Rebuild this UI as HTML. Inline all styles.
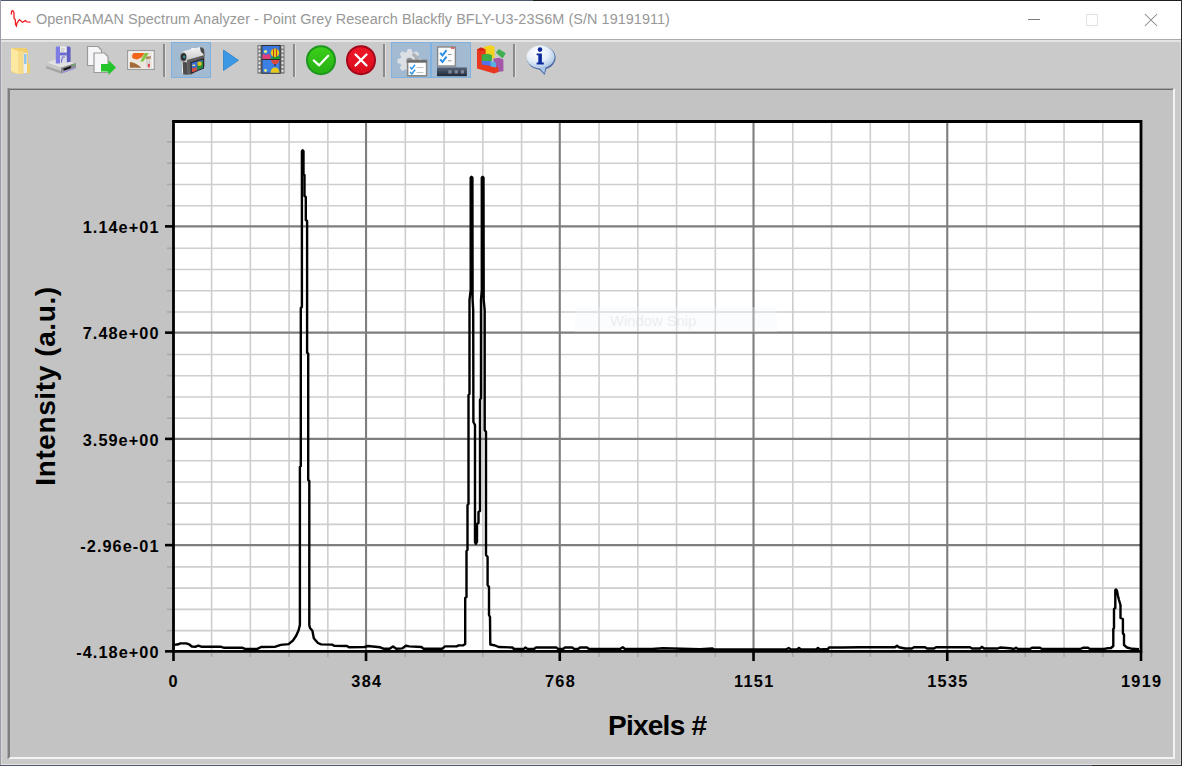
<!DOCTYPE html>
<html><head><meta charset="utf-8">
<style>
*{margin:0;padding:0;box-sizing:border-box}
html,body{width:1182px;height:766px;overflow:hidden;background:#cacaca;font-family:"Liberation Sans",sans-serif;position:relative}
.abs{position:absolute}
#title{left:1px;top:1px;width:1180px;height:38px;background:#fff}
#ttext{left:36px;top:10.5px;font-size:14.45px;color:#989898;white-space:nowrap;letter-spacing:0.05px}
#panel{left:8px;top:88px;width:1167px;height:671px;background:#c3c3c3;border-top:1px solid #a4a4a4;border-left:2px solid #7e7e7e;border-right:2px solid #f2f2f2;border-bottom:2px solid #f2f2f2;box-shadow:inset 0 1px 0 #6c6c6c,-1px 0 0 #a8a8a8}
.chart{position:absolute;left:0;top:0}
.mn{stroke:#cecece;stroke-width:1.6}
.mj{stroke:#7e7e7e;stroke-width:2.1}
.tn{stroke:#a8a8a8;stroke-width:1.6}
.tj{stroke:#000;stroke-width:2.6}
.xl{position:absolute;top:672px;width:80px;text-align:center;font-weight:bold;font-size:16.3px;letter-spacing:1.3px;text-indent:1.3px;color:#000}
.yl{position:absolute;left:0;width:159.5px;text-align:right;font-weight:bold;font-size:16.3px;letter-spacing:1.05px;color:#000}
#ylab{left:46px;top:386px;transform:translate(-50%,-50%) rotate(-90deg);font-weight:bold;font-size:28px;white-space:nowrap;letter-spacing:0.6px}
#xlab{left:608px;top:709.6px;font-weight:bold;font-size:28px;white-space:nowrap;letter-spacing:-0.75px}
.sep{position:absolute;top:44px;width:3px;height:33px;background:#8a8a8a;border-right:1px solid #e0e0e0}
.chk{position:absolute;top:42px;height:36px;background:#a2bbd3;border:1px solid #7eb2e0}
</style></head><body>
<div class="abs" style="left:0;top:0;width:533px;height:1px;background:#4c5b70"></div>
<div class="abs" style="left:533px;top:0;width:649px;height:1px;background:#1e1e1e"></div>
<div class="abs" style="left:0;top:0;width:1px;height:766px;background:#9a9ea6"></div>
<div class="abs" style="left:1181px;top:0;width:1px;height:766px;background:#2c2a28"></div>
<div class="abs" style="left:0;top:765px;width:1092px;height:1px;background:#4e5a6a"></div><div class="abs" style="left:1092px;top:765px;width:90px;height:1px;background:#2e2e2e"></div>
<div class="abs" style="left:1px;top:1px;width:1px;height:764px;background:#d6d6d6"></div>
<div class="abs" style="left:1180px;top:1px;width:1px;height:764px;background:#d8d8d8"></div>
<div class="abs" style="left:1px;top:764px;width:1180px;height:1px;background:#e4e4e4"></div>
<div id="title" class="abs"></div>
<div class="abs" style="left:1px;top:39px;width:1180px;height:1px;background:#ababab"></div>
<div class="abs" style="left:1px;top:40px;width:1180px;height:2px;background:#e4e4e4"></div>
<div id="ttext" class="abs">OpenRAMAN Spectrum Analyzer - Point Grey Research Blackfly BFLY-U3-23S6M (S/N 19191911)</div>
<div class="chk" style="left:171px;width:40px"></div>
<div class="chk" style="left:391px;width:40px"></div>
<div class="chk" style="left:431px;width:40px"></div>
<div class="sep" style="left:163px"></div>
<div class="sep" style="left:293px"></div>
<div class="sep" style="left:383px"></div>
<div class="sep" style="left:513px"></div>
<div id="panel" class="abs"></div>
<svg class="chart" width="1182" height="766" viewBox="0 0 1182 766">
<rect x="173" y="121" width="968" height="530" fill="#fff"/>
<g><line x1="211.6" y1="120.16" x2="211.6" y2="651.36" class="mn"/><line x1="250.35" y1="120.16" x2="250.35" y2="651.36" class="mn"/><line x1="289.09" y1="120.16" x2="289.09" y2="651.36" class="mn"/><line x1="327.84" y1="120.16" x2="327.84" y2="651.36" class="mn"/><line x1="405.34" y1="120.16" x2="405.34" y2="651.36" class="mn"/><line x1="444.09" y1="120.16" x2="444.09" y2="651.36" class="mn"/><line x1="482.83" y1="120.16" x2="482.83" y2="651.36" class="mn"/><line x1="521.58" y1="120.16" x2="521.58" y2="651.36" class="mn"/><line x1="599.08" y1="120.16" x2="599.08" y2="651.36" class="mn"/><line x1="637.83" y1="120.16" x2="637.83" y2="651.36" class="mn"/><line x1="676.57" y1="120.16" x2="676.57" y2="651.36" class="mn"/><line x1="715.32" y1="120.16" x2="715.32" y2="651.36" class="mn"/><line x1="792.82" y1="120.16" x2="792.82" y2="651.36" class="mn"/><line x1="831.57" y1="120.16" x2="831.57" y2="651.36" class="mn"/><line x1="870.31" y1="120.16" x2="870.31" y2="651.36" class="mn"/><line x1="909.06" y1="120.16" x2="909.06" y2="651.36" class="mn"/><line x1="986.56" y1="120.16" x2="986.56" y2="651.36" class="mn"/><line x1="1025.31" y1="120.16" x2="1025.31" y2="651.36" class="mn"/><line x1="1064.05" y1="120.16" x2="1064.05" y2="651.36" class="mn"/><line x1="1102.8" y1="120.16" x2="1102.8" y2="651.36" class="mn"/><line x1="172.3" y1="630.66" x2="1141" y2="630.66" class="mn"/><line x1="172.3" y1="609.41" x2="1141" y2="609.41" class="mn"/><line x1="172.3" y1="588.17" x2="1141" y2="588.17" class="mn"/><line x1="172.3" y1="566.92" x2="1141" y2="566.92" class="mn"/><line x1="172.3" y1="524.42" x2="1141" y2="524.42" class="mn"/><line x1="172.3" y1="503.17" x2="1141" y2="503.17" class="mn"/><line x1="172.3" y1="481.93" x2="1141" y2="481.93" class="mn"/><line x1="172.3" y1="460.68" x2="1141" y2="460.68" class="mn"/><line x1="172.3" y1="418.18" x2="1141" y2="418.18" class="mn"/><line x1="172.3" y1="396.93" x2="1141" y2="396.93" class="mn"/><line x1="172.3" y1="375.69" x2="1141" y2="375.69" class="mn"/><line x1="172.3" y1="354.44" x2="1141" y2="354.44" class="mn"/><line x1="172.3" y1="311.94" x2="1141" y2="311.94" class="mn"/><line x1="172.3" y1="290.69" x2="1141" y2="290.69" class="mn"/><line x1="172.3" y1="269.45" x2="1141" y2="269.45" class="mn"/><line x1="172.3" y1="248.2" x2="1141" y2="248.2" class="mn"/><line x1="172.3" y1="205.7" x2="1141" y2="205.7" class="mn"/><line x1="172.3" y1="184.45" x2="1141" y2="184.45" class="mn"/><line x1="172.3" y1="163.21" x2="1141" y2="163.21" class="mn"/><line x1="172.3" y1="141.96" x2="1141" y2="141.96" class="mn"/><line x1="366.04" y1="120.16" x2="366.04" y2="651.36" class="mj"/><line x1="559.78" y1="120.16" x2="559.78" y2="651.36" class="mj"/><line x1="753.52" y1="120.16" x2="753.52" y2="651.36" class="mj"/><line x1="947.26" y1="120.16" x2="947.26" y2="651.36" class="mj"/><line x1="172.3" y1="226.4" x2="1141" y2="226.4" class="mj"/><line x1="172.3" y1="332.64" x2="1141" y2="332.64" class="mj"/><line x1="172.3" y1="438.88" x2="1141" y2="438.88" class="mj"/><line x1="172.3" y1="545.12" x2="1141" y2="545.12" class="mj"/></g>
<g><line x1="173.5" y1="651.36" x2="173.5" y2="661" class="tj"/><line x1="211.6" y1="651.36" x2="211.6" y2="657" class="tn"/><line x1="250.35" y1="651.36" x2="250.35" y2="657" class="tn"/><line x1="289.09" y1="651.36" x2="289.09" y2="657" class="tn"/><line x1="327.84" y1="651.36" x2="327.84" y2="657" class="tn"/><line x1="366.04" y1="651.36" x2="366.04" y2="661" class="tj"/><line x1="405.34" y1="651.36" x2="405.34" y2="657" class="tn"/><line x1="444.09" y1="651.36" x2="444.09" y2="657" class="tn"/><line x1="482.83" y1="651.36" x2="482.83" y2="657" class="tn"/><line x1="521.58" y1="651.36" x2="521.58" y2="657" class="tn"/><line x1="559.78" y1="651.36" x2="559.78" y2="661" class="tj"/><line x1="599.08" y1="651.36" x2="599.08" y2="657" class="tn"/><line x1="637.83" y1="651.36" x2="637.83" y2="657" class="tn"/><line x1="676.57" y1="651.36" x2="676.57" y2="657" class="tn"/><line x1="715.32" y1="651.36" x2="715.32" y2="657" class="tn"/><line x1="753.52" y1="651.36" x2="753.52" y2="661" class="tj"/><line x1="792.82" y1="651.36" x2="792.82" y2="657" class="tn"/><line x1="831.57" y1="651.36" x2="831.57" y2="657" class="tn"/><line x1="870.31" y1="651.36" x2="870.31" y2="657" class="tn"/><line x1="909.06" y1="651.36" x2="909.06" y2="657" class="tn"/><line x1="947.26" y1="651.36" x2="947.26" y2="661" class="tj"/><line x1="986.56" y1="651.36" x2="986.56" y2="657" class="tn"/><line x1="1025.31" y1="651.36" x2="1025.31" y2="657" class="tn"/><line x1="1064.05" y1="651.36" x2="1064.05" y2="657" class="tn"/><line x1="1102.8" y1="651.36" x2="1102.8" y2="657" class="tn"/><line x1="1141" y1="651.36" x2="1141" y2="661" class="tj"/><line x1="165" y1="651.36" x2="173" y2="651.36" class="tj"/><line x1="167" y1="630.66" x2="173" y2="630.66" class="tn"/><line x1="167" y1="609.41" x2="173" y2="609.41" class="tn"/><line x1="167" y1="588.17" x2="173" y2="588.17" class="tn"/><line x1="167" y1="566.92" x2="173" y2="566.92" class="tn"/><line x1="165" y1="545.12" x2="173" y2="545.12" class="tj"/><line x1="167" y1="524.42" x2="173" y2="524.42" class="tn"/><line x1="167" y1="503.17" x2="173" y2="503.17" class="tn"/><line x1="167" y1="481.93" x2="173" y2="481.93" class="tn"/><line x1="167" y1="460.68" x2="173" y2="460.68" class="tn"/><line x1="165" y1="438.88" x2="173" y2="438.88" class="tj"/><line x1="167" y1="418.18" x2="173" y2="418.18" class="tn"/><line x1="167" y1="396.93" x2="173" y2="396.93" class="tn"/><line x1="167" y1="375.69" x2="173" y2="375.69" class="tn"/><line x1="167" y1="354.44" x2="173" y2="354.44" class="tn"/><line x1="165" y1="332.64" x2="173" y2="332.64" class="tj"/><line x1="167" y1="311.94" x2="173" y2="311.94" class="tn"/><line x1="167" y1="290.69" x2="173" y2="290.69" class="tn"/><line x1="167" y1="269.45" x2="173" y2="269.45" class="tn"/><line x1="167" y1="248.2" x2="173" y2="248.2" class="tn"/><line x1="165" y1="226.4" x2="173" y2="226.4" class="tj"/><line x1="167" y1="205.7" x2="173" y2="205.7" class="tn"/><line x1="167" y1="184.45" x2="173" y2="184.45" class="tn"/><line x1="167" y1="163.21" x2="173" y2="163.21" class="tn"/><line x1="167" y1="141.96" x2="173" y2="141.96" class="tn"/></g>
<polyline points="174.2,644.9 178.6,644.3 180.3,643.4 186.3,643.4 189,644.3 191.8,646.5 195.7,646.7 198.4,645.6 201.2,646.7 208.3,646.7 220.4,646.7 224.3,647.8 242.4,647.8 245.2,648.9 257.3,648.9 261.1,647 275.4,646.7 280.9,644.9 288.6,644.1 293,640.5 296.3,635.5 298.5,630.5 299.9,625 299.9,467 300.8,466 300.8,308 301.9,307 301.9,151.2 302.6,150.3 303.5,151.2 303.5,174 304.5,175 304.5,196 305.8,197 305.8,220 307.1,221 307.1,352.7 308.2,353.7 308.2,480 309.3,481 309.3,625 310,628 312.4,630.8 313.8,638.3 317.9,643 321.2,644.4 332.1,644.6 334.1,645.7 347,646 349,647.3 364.5,647 367.9,646 380.1,647.3 383.5,648.7 389.6,648.7 393,646.4 396.3,648.7 402.4,648.4 405.8,645.7 409.2,646.4 421.4,647 423.4,648.7 442.3,648.7 445,646.4 456.6,646.4 458.6,645.4 463,645.4 465.2,644 465.2,598 466.5,597 466.5,551 467.5,550 467.5,505 468.5,504 468.5,395 469.5,394 469.5,300 470.7,290 470.7,177.6 471.5,176.8 472.4,177.6 472.6,300 473.2,310 473.4,422 475,425 475,542 475.8,544 477,542 477,524 478.5,523 478.5,512 480,511 480,400 481,398 481,300 481.8,290 481.8,177.6 482.6,176.8 483.5,177.6 483.7,300 484.7,310 484.7,430 486,432 486,555 487.6,557 487.6,585 489,587 489,615 490,617 490.3,644.5 494.1,645.2 498.7,647 512.4,647.5 514,649 523.8,649 525.3,647.5 527.6,649 534,649 536,647.5 556.5,647.5 558,649 563,649 565,647.5 572.5,647.5 574,649 578,649 580,647.5 587,647.5 589,649 620,649 622.7,647.3 625,649 652,649 663,648.3 700,649.2 712.5,648.5 714,649.5 786,649.5 788.7,648 791,649.5 797,649.5 799,648 801,649.5 816,649.5 818,648 820,649.5 828,649 829,647.5 842,647.5 860,647.3 895,647.3 897,645.8 899,647.3 905,648.5 912,648.5 914,647.3 925,647.3 927,648.5 934,648.5 936,647.3 970,647.3 972,648.5 980,648.5 982,646.8 984,648.5 998,648.5 1000,647.5 1010,648.2 1014,649 1016,647.8 1018,649 1030,649 1032,647.8 1040,647.8 1042,649 1080,649 1083,647.8 1088,647.8 1090,649 1104,649 1107,648.3 1111,648 1113.3,646 1113.3,629 1114,628 1114,609 1115.3,608 1115.3,590.2 1116,589.4 1117,591 1118,596 1119,600 1120.5,605 1120.5,618 1122.9,619 1122.9,633.5 1124,634.5 1124,645 1127,647.5 1132,648.8 1139,649.2" fill="none" stroke="#000" stroke-width="2.4" stroke-linejoin="round"/>
<path d="M173.5,121.5 L1141,121.5 M1141,120.1 L1141,652.7 M1142.4,651.36 L172.1,651.36 M173.5,652.7 L173.5,120.1" fill="none" stroke="#000" stroke-width="2.8"/>
</svg>
<svg class="chart" width="1182" height="766" viewBox="0 0 1182 766">
<defs>
<linearGradient id="gGreen" x1="0" y1="0" x2="0" y2="1"><stop offset="0" stop-color="#3ccf1a"/><stop offset="1" stop-color="#25b014"/></linearGradient>
<linearGradient id="gRed" x1="0" y1="0" x2="0" y2="1"><stop offset="0" stop-color="#f01828"/><stop offset="1" stop-color="#d80c1c"/></linearGradient>
<radialGradient id="gInfo" cx="0.38" cy="0.3" r="0.75"><stop offset="0" stop-color="#ffffff"/><stop offset="0.55" stop-color="#e4eef8"/><stop offset="0.9" stop-color="#b4cce8"/><stop offset="1" stop-color="#8aa8d0"/></radialGradient>
<linearGradient id="gCam" x1="0" y1="0" x2="0" y2="1"><stop offset="0" stop-color="#f4f4f4"/><stop offset="0.5" stop-color="#c9c9c9"/><stop offset="1" stop-color="#8e8e8e"/></linearGradient>
<linearGradient id="gSky" x1="0" y1="0" x2="0" y2="1"><stop offset="0" stop-color="#2f6ee0"/><stop offset="1" stop-color="#6aa8f0"/></linearGradient>
<linearGradient id="gBar" x1="0" y1="0" x2="0" y2="1"><stop offset="0" stop-color="#5a6478"/><stop offset="1" stop-color="#1e283a"/></linearGradient>
</defs>
<!-- title icon -->
<path d="M11.3,14.5 L11.6,11.3 L12.8,10.6 L13.9,12.5 L14.1,18.5 L15.3,19.5 L15.6,24.5 L16.4,26 L17,23.2 L18,21.6 L19.4,19.6 L21,21 L22.5,22.2 L24,21.4 L25.4,20.6 L27,21.9 L30.6,22.2" fill="none" stroke="#f41a22" stroke-width="1.3"/>
<!-- window controls -->
<line x1="1028" y1="19.5" x2="1040" y2="19.5" stroke="#7c7c7c" stroke-width="1"/>
<rect x="1086.5" y="14.5" width="11" height="11" fill="none" stroke="#e2e2e2" stroke-width="1"/>
<path d="M1145,14 L1157,26 M1157,14 L1145,26" stroke="#858585" stroke-width="1.05"/>

<!-- 1 folder -->
<path d="M12,48 L26,48 L28,51 L28,73 L12,73Z" fill="#f0cf6c"/>
<path d="M11,48 L18,51 L18,74 L11,71Z" fill="#fde8a2"/>
<rect x="18" y="51" width="5.5" height="23" fill="#f7dc88"/>
<rect x="23.5" y="53" width="3.5" height="20" fill="#e8eef2"/>
<rect x="24" y="54" width="2.5" height="10" fill="#8fc6ea"/>
<path d="M27,62 L30,64 L30,73 L27,74Z" fill="#efcf6a"/>

<!-- 2 drive -->
<path d="M46.2,62.5 L57,58.8 L75.8,63 L75.8,68.3 L61,73.5 L46.2,68.3Z" fill="#a8a8a8"/>
<path d="M46.2,62.5 L57,58.8 L75.8,63 L61,67.8Z" fill="#e2e2e2"/>
<path d="M61,67.8 L75.8,63 L75.8,68.3 L61,73.5Z" fill="#8c8c8c"/>
<path d="M46.2,62.5 L61,67.8 L61,73.5 L46.2,68.3Z" fill="#c8c8c8"/>
<path d="M46.2,66 L61,71 L61,73.5 L46.2,68.3Z" fill="#a4a4a4"/>
<path d="M63,68.8 L71.5,65.8 L70.5,68.3 L64,70.4Z" fill="#111"/>
<path d="M62,72.6 L75,68.1" stroke="#9c96e2" stroke-width="1.3"/>
<circle cx="73.6" cy="64.6" r="0.8" fill="#3c3"/>
<path d="M55.8,47.5 Q55.8,46.5 57.5,46.5 L60,46.5 L60,63.6 L55.8,63.6Z" fill="#7c7ce4"/>
<path d="M66.6,46.5 L69,46.5 Q70.6,46.5 70.6,48 L70.6,61.7 L66.6,62.5Z" fill="#5e5ec4"/>
<rect x="60" y="46.5" width="6.6" height="6.1" fill="#ededed"/>
<path d="M61,49 L65,49 M61,51 L64,51" stroke="#a0a0a0" stroke-width="0.6"/>
<rect x="60" y="52.6" width="6.6" height="3" fill="#6868d0"/>
<rect x="60" y="55.6" width="6.6" height="7.5" fill="#dcdce6"/>
<path d="M61.2,62.5 L62.5,57 L65,57" fill="none" stroke="#7070d0" stroke-width="1.1"/>
<!-- 3 copy -->
<path d="M87.5,46.5 L98,46.5 L101.5,50 L101.5,65.5 L87.5,65.5Z" fill="#f6f6f8" stroke="#9a9a9a" stroke-width="1.2"/>
<path d="M94,53 L104.5,53 L108,56.5 L108,72.5 L94,72.5Z" fill="#f6f6f8" stroke="#9a9a9a" stroke-width="1.2"/>
<path d="M101,64 L108.5,64 L108.5,60.2 L116,67.6 L108.5,75 L108.5,71.5 L101,71.5Z" fill="#22c52a"/>

<!-- 4 picture -->
<rect x="127.6" y="50.6" width="26.6" height="18.8" fill="#fbfbfb" stroke="#9c9c9c" stroke-width="1.2"/>
<rect x="129.6" y="52.4" width="22.6" height="15.4" fill="#ebe7df"/>
<path d="M133.5,53 L144.8,53 L141.5,57.5 L137,59.6 L133,58.6 Q131.6,57 132.3,55.2Z" fill="#f0641a"/>
<path d="M144.8,53 L148.8,53 L143.4,61.6 L140.2,61.4Z" fill="#84c444"/>
<path d="M129.8,62 Q136,62.5 141.5,67.8 L129.8,67.8Z" fill="#a36a3a"/>
<path d="M145.8,56.8 L150.6,56 L151,58.6 L146.2,59.4Z" fill="#b08a60"/>
<path d="M146.2,59.4 L147.4,59.2 L147.8,67.5 L146.6,67.5Z" fill="#c4c4c4"/>
<path d="M148.6,59 L149.8,58.8 L149.8,64 L148.6,64.2Z" fill="#c8c8c8"/>
<path d="M148.2,64 L149.8,63.8 L149.6,67.5 L148.2,67.5Z" fill="#d81e2c"/>
<!-- 5 camcorder -->
<path d="M181,54 Q182,51.2 186,50.6 L199.5,47.2 Q204.5,46.8 204.5,52 L204.5,66.5 L191,74.5 L186.5,74.5 L183,62Z" fill="url(#gCam)"/>
<path d="M187,60 L204.5,55 L204.5,66.5 L191,74.5 L187.5,74.5Z" fill="#5c5c5c"/>
<path d="M200,47.2 Q204.5,46.8 204.5,52 L204.5,56 Q203,53 201,52 Q200,49 200,47.2Z" fill="#4a4a4a"/>
<ellipse cx="193" cy="48.8" rx="2.2" ry="0.9" fill="#f8f8f8"/>
<ellipse cx="183.3" cy="57" rx="3.4" ry="4.6" fill="#8a8a8a"/>
<ellipse cx="183.6" cy="57" rx="2.6" ry="3.7" fill="#2c2c2c"/>
<ellipse cx="184.2" cy="56.8" rx="1.3" ry="1.6" fill="#3a8a98"/>
<path d="M181.3,61.5 L187,62.5 L187.5,74.8 L182.3,74.3Z" fill="#4c4c4c"/>
<path d="M181.3,61.5 L182.6,61.8 L183.2,74.3 L182.3,74.3Z" fill="#f2f2f2"/>
<path d="M190.4,62.2 L204,58.2 L204,68.5 L191,73.8Z" fill="#262626"/>
<path d="M191.5,63 L203,59.8 L203,67.8 L192,72.3Z" fill="#3c6ad8"/>
<path d="M197,62.6 L203,61 L203,67.8 L197.3,70Z" fill="#2a8a3a"/>
<circle cx="199.6" cy="63.8" r="2.2" fill="#d8c020"/>
<path d="M191.8,68.6 L196.6,67.2 L196.9,70.4 L192,72.3Z" fill="#d84a3a"/>
<rect x="192.5" y="64.6" width="2.6" height="1.4" fill="#e8e880"/>
<!-- 6 play -->
<path d="M223.5,50 L238.5,60.3 L223.5,70.5Z" fill="#3a98e4" stroke="#2d80cc" stroke-width="0.8"/>

<!-- 7 film -->
<rect x="257.4" y="45" width="27.2" height="28.7" fill="#808080"/>
<rect x="261.4" y="45" width="19.2" height="28.7" fill="#2e2e2e"/>
<rect x="262.4" y="46" width="17.2" height="13" fill="#3a78de"/>
<rect x="262.4" y="60" width="17.2" height="12.7" fill="#3f80e4"/>
<path d="M262.4,59 L262.4,55 Q264,53 266,55.5 Q268,53 270,55 L271,59Z" fill="#e0407a"/>
<path d="M270,59 Q273,55 279.6,56 L279.6,59Z" fill="#1e9a3a"/>
<circle cx="275" cy="52.7" r="4.3" fill="#e8c818"/>
<path d="M273.5,48.5 L273.5,57 M276.5,48.5 L276.5,57" stroke="#b03020" stroke-width="0.9"/>
<circle cx="265.5" cy="51.5" r="1.6" fill="#e8f080"/>
<path d="M271,60 L279.6,60 Q279,63.5 276,64.5 L274,64.5 Q271.5,63.5 271,60Z" fill="#d84a40"/>
<path d="M274,64.5 L276,64.5 L275,66.5Z" fill="#111"/>
<path d="M270.5,72.7 Q271,67.5 275,67.5 Q279,67.5 279.6,72.7Z" fill="#e8c818"/>
<circle cx="265.5" cy="70.5" r="1.4" fill="#e8f080"/>
<g fill="#e6e6e6">
<rect x="258.6" y="46.3" width="1.8" height="2.2"/><rect x="258.6" y="50.2" width="1.8" height="2.2"/><rect x="258.6" y="54.1" width="1.8" height="2.2"/><rect x="258.6" y="58" width="1.8" height="2.2"/><rect x="258.6" y="61.9" width="1.8" height="2.2"/><rect x="258.6" y="65.8" width="1.8" height="2.2"/><rect x="258.6" y="69.7" width="1.8" height="2.2"/>
<rect x="281.6" y="46.3" width="1.8" height="2.2"/><rect x="281.6" y="50.2" width="1.8" height="2.2"/><rect x="281.6" y="54.1" width="1.8" height="2.2"/><rect x="281.6" y="58" width="1.8" height="2.2"/><rect x="281.6" y="61.9" width="1.8" height="2.2"/><rect x="281.6" y="65.8" width="1.8" height="2.2"/><rect x="281.6" y="69.7" width="1.8" height="2.2"/>
</g>
<!-- 8 green check -->
<circle cx="321" cy="60.2" r="15" fill="#1d961e"/>
<circle cx="321" cy="60.2" r="13" fill="url(#gGreen)"/>
<path d="M313.8,60.5 L319.2,65.3 L328.2,55.8" fill="none" stroke="#fff" stroke-width="2.3" stroke-linecap="round" stroke-linejoin="round"/>

<!-- 9 red x -->
<circle cx="361" cy="60.2" r="15" fill="#a4061a"/>
<circle cx="361" cy="60.2" r="13" fill="url(#gRed)"/>
<path d="M355.5,54.5 L366.5,65.5 M366.5,54.5 L355.5,65.5" fill="none" stroke="#fff" stroke-width="2.3" stroke-linecap="round"/>

<!-- 10 gear + window -->
<g fill="#dce0e5">
<circle cx="409.5" cy="61" r="9.4"/>
<rect x="407" y="49" width="5" height="24" rx="1.5"/>
<rect x="397.5" y="58.5" width="24" height="5" rx="1.5"/>
<rect x="407" y="49" width="5" height="24" rx="1.5" transform="rotate(45 409.5 61)"/>
<rect x="407" y="49" width="5" height="24" rx="1.5" transform="rotate(-45 409.5 61)"/>
</g>
<path d="M413,52.5 Q419.5,55.5 419.5,61 L415.5,61 Q415,57 412,55.5Z" fill="#aeb2b8"/>
<circle cx="409.5" cy="61" r="3.2" fill="#8a8f96"/>
<rect x="407.6" y="60.4" width="19" height="15.4" fill="#fff" stroke="#888" stroke-width="1.6"/>
<rect x="407.5" y="60.3" width="19.2" height="2.4" fill="#6a6a6a"/>
<path d="M410,67 L411.8,69 L415,64.8 M410,72 L411.8,74 L415,69.8" fill="none" stroke="#3a9ae8" stroke-width="1.6"/>
<path d="M416.5,67.5 L423.5,67.5 M416.5,72.5 L423.5,72.5" stroke="#c4c4c4" stroke-width="1.1"/>

<!-- 11 checklist + bar -->
<rect x="437.6" y="47" width="17.8" height="19" fill="#fbfbfb" stroke="#888" stroke-width="1.4"/>
<rect x="451" y="47.2" width="3.5" height="1.6" fill="#e04a4a"/>
<path d="M440.2,52.8 L442.5,55.5 L446.5,50.2 M440.2,59.3 L442.5,62 L446.5,56.7" fill="none" stroke="#2a8ee6" stroke-width="2"/>
<path d="M448,54.5 L451.5,54.5 M448,60.8 L451.5,60.8" stroke="#9a9a9a" stroke-width="1"/>
<rect x="437" y="67.4" width="29.9" height="8.8" fill="url(#gBar)"/>
<rect x="448.3" y="70.2" width="3.3" height="3.3" fill="#7e8898"/><rect x="454.6" y="70.2" width="3.3" height="3.3" fill="#7e8898"/><rect x="460.8" y="70.2" width="3.3" height="3.3" fill="#7e8898"/>

<!-- 12 blocks -->
<path d="M483.6,47 L490,45.2 L494.5,46.5 L494.5,58.3 L483.6,58.3Z" fill="#f2d21c"/>
<path d="M493.5,58.5 L499,57.8 L503.4,59.5 L503.4,71.3 L497,72 L493.5,70Z" fill="#a456a8"/>
<path d="M477,49.5 L481,47.5 L485.7,49.5 L485.7,63.8 L498.5,67.5 L498.5,72 L494,73.4 L477,68.5Z" fill="#e8381e"/>
<path d="M481.7,54.5 L488,53.8 L492,55 L492,60.9 L481.7,60.9Z" fill="#3cae48"/>
<path d="M481.7,60.9 L491,60.9 L491,66.1 L481.7,64.5Z" fill="#5070ec"/>
<path d="M490.5,61.5 L494.5,61.5 Q496,62 496,64 L496,67.5 L490.5,66.5Z" fill="#5aaee0"/>
<path d="M495.8,52.5 L499,49.1 L505.8,53.2 L502.5,58.5Z" fill="#3eb04e"/>
<path d="M477,49.5 L481,47.5 L485.7,49.5 L481,51Z" fill="#d82010"/>

<!-- 13 info -->
<path d="M536,66 L547,66.5 L544.6,75 Z" fill="#4a6aa4"/>
<ellipse cx="541.2" cy="57.8" rx="14.4" ry="11.8" fill="#4a6aa4"/>
<path d="M537,65.5 L546,65.5 L544.3,73.2 Z" fill="#a8c8ea"/>
<ellipse cx="540.5" cy="57" rx="14" ry="11.4" fill="url(#gInfo)"/>
<circle cx="540" cy="49.6" r="2.3" fill="#0c2a9c"/>
<path d="M536.6,53.6 L541.9,53.6 L541.9,62.6 L543.8,62.6 L543.8,64.6 L536.6,64.6 L536.6,62.6 L538.3,62.6 L538.3,55.2 L536.6,55.2Z" fill="#0c2a9c"/>
</svg>

<div class="xl" style="left:133px">0</div><div class="xl" style="left:326.2px">384</div><div class="xl" style="left:519.9px">768</div><div class="xl" style="left:713.6px">1151</div><div class="xl" style="left:907.3px">1535</div><div class="xl" style="left:1101px">1919</div><div class="yl" style="top:218.2px">1.14e+01</div><div class="yl" style="top:324.44px">7.48e+00</div><div class="yl" style="top:430.68px">3.59e+00</div><div class="yl" style="top:536.92px">-2.96e-01</div><div class="yl" style="top:643.16px">-4.18e+00</div>
<div id="ylab" class="abs">Intensity (a.u.)</div>
<div id="xlab" class="abs">Pixels #</div>
<div class="abs" style="left:575px;top:307px;width:202px;height:25px;background:rgba(240,245,252,0.3)"></div>
<div class="abs" style="left:610px;top:312.5px;font-size:14.8px;color:rgba(200,200,200,0.3);white-space:nowrap">Window Snip</div>
</body></html>
